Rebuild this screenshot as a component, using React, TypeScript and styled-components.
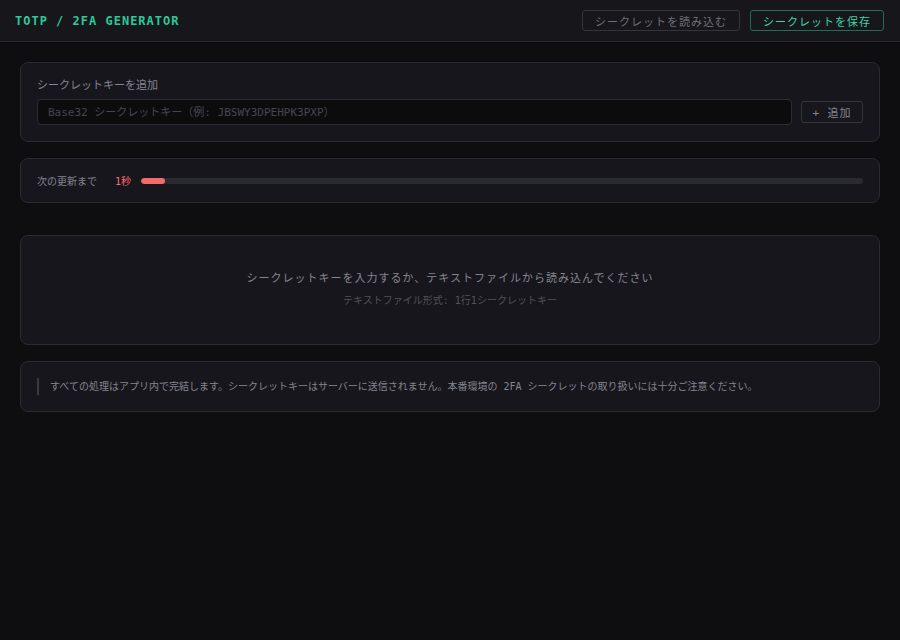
import React, { useState } from 'react';
import styled, { createGlobalStyle } from 'styled-components';

const GlobalStyles = createGlobalStyle`
  * { box-sizing: border-box; }
  html, body {
    margin: 0;
    background: #0e0e11;
    color: #a0a0aa;
    font-family: 'DejaVu Sans Mono', 'Noto Sans CJK JP', monospace;
  }
`;

const Page = styled.div`
  min-height: 640px;
  background: #0e0e11;
`;

const Header = styled.header`
  height: 42px;
  display: flex;
  align-items: center;
  justify-content: space-between;
  padding: 0 16px 0 15px;
  background: #16161b;
  border-bottom: 1px solid #2a2a31;
`;

const Title = styled.h1`
  margin: 0;
  font-size: 12px;
  font-weight: bold;
  letter-spacing: 1px;
  color: #2dc89b;
`;

const HeaderActions = styled.div`
  display: flex;
  gap: 10px;
`;

const Button = styled.button<{ $accent?: boolean }>`
  height: 21px;
  padding: 0 12px;
  font-family: inherit;
  font-size: 11px;
  letter-spacing: 1px;
  border-radius: 3px;
  background: transparent;
  cursor: pointer;
  border: 1px solid ${(p) => (p.$accent ? '#1f6e57' : '#34343c')};
  color: ${(p) => (p.$accent ? '#3ed3a5' : '#6f6f79')};
`;

const Main = styled.main`
  padding: 20px;
  display: flex;
  flex-direction: column;
  gap: 16px;
`;

const Card = styled.section<{ $spaced?: boolean }>`
  background: #17161d;
  border: 1px solid #2a2a32;
  border-radius: 8px;
  padding: 16px;
  margin-top: ${(p) => (p.$spaced ? '16px' : '0')};
`;

const Label = styled.div`
  font-size: 11px;
  line-height: 13px;
  color: #85858f;
  margin: 0 0 7px;
`;

const InputRow = styled.div`
  display: flex;
  align-items: center;
  gap: 9px;
`;

const KeyInput = styled.input`
  flex: 1;
  height: 26px;
  padding: 0 10px;
  font-family: inherit;
  font-size: 11px;
  color: #c0c0c8;
  background: #0c0c0f;
  border: 1px solid #2c2c34;
  border-radius: 4px;
  outline: none;
  &::placeholder { color: #46464f; }
`;

const AddButton = styled.button`
  width: 62px;
  height: 22px;
  font-family: inherit;
  font-size: 11px;
  letter-spacing: 1px;
  color: #85858f;
  background: transparent;
  border: 1px solid #34343c;
  border-radius: 3px;
`;

const TimerRow = styled.div`
  display: flex;
  align-items: center;
  height: 11px;
`;

const TimerLabel = styled.span`
  font-size: 10px;
  color: #85858f;
  width: 78px;
`;

const Seconds = styled.span`
  font-size: 10px;
  color: #ff6b6b;
  width: 26px;
`;

const Track = styled.div`
  flex: 1;
  height: 6px;
  background: #2a2a31;
  border-radius: 3px;
  overflow: hidden;
`;

const Fill = styled.div`
  height: 100%;
  background: #f26a6a;
  border-radius: 3px;
`;

const Empty = styled(Card)`
  height: 110px;
  display: flex;
  flex-direction: column;
  align-items: center;
  gap: 10px;
  padding-top: 36px;
`;

const EmptyTitle = styled.p`
  margin: 0;
  font-size: 11px;
  line-height: 13px;
  letter-spacing: 1px;
  color: #85858f;
`;

const EmptyHint = styled.p`
  margin: 0;
  font-size: 10px;
  line-height: 12px;
  color: #52525b;
`;

const Notice = styled.p`
  margin: 0;
  padding-left: 11px;
  border-left: 2px solid #3a3a42;
  font-size: 10px;
  line-height: 17px;
  color: #85858f;
`;

export default function App() {
  const [secret, setSecret] = useState('');
  const remaining = 1;

  return (
    <>
      <GlobalStyles />
      <Page>
        <Header>
          <Title>TOTP / 2FA GENERATOR</Title>
          <HeaderActions>
            <Button>シークレットを読み込む</Button>
            <Button $accent>シークレットを保存</Button>
          </HeaderActions>
        </Header>

        <Main>
          <Card>
            <Label>シークレットキーを追加</Label>
            <InputRow>
              <KeyInput
                value={secret}
                onChange={(e) => setSecret(e.target.value)}
                placeholder="Base32 シークレットキー（例: JBSWY3DPEHPK3PXP）"
              />
              <AddButton>+ 追加</AddButton>
            </InputRow>
          </Card>

          <Card>
            <TimerRow>
              <TimerLabel>次の更新まで</TimerLabel>
              <Seconds>{remaining}秒</Seconds>
              <Track>
                <Fill style={{ width: `${(remaining / 30) * 100}%` }} />
              </Track>
            </TimerRow>
          </Card>

          <Empty $spaced>
            <EmptyTitle>シークレットキーを入力するか、テキストファイルから読み込んでください</EmptyTitle>
            <EmptyHint>テキストファイル形式: 1行1シークレットキー</EmptyHint>
          </Empty>

          <Card>
            <Notice>
              すべての処理はアプリ内で完結します。シークレットキーはサーバーに送信されません。本番環境の 2FA シークレットの取り扱いには十分ご注意ください。
            </Notice>
          </Card>
        </Main>
      </Page>
    </>
  );
}
